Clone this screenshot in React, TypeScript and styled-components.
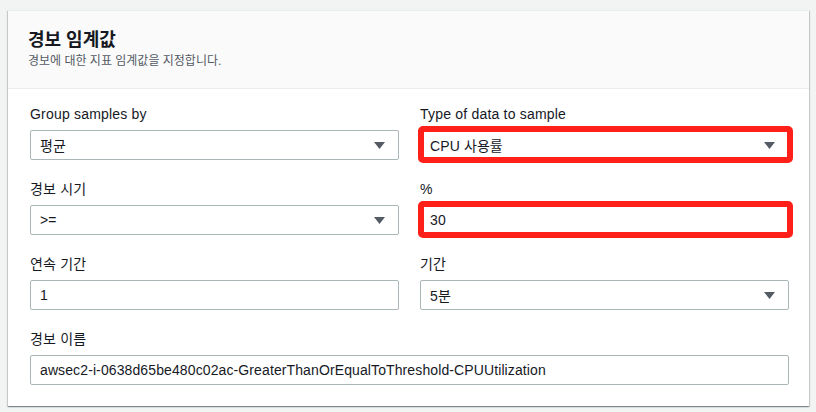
import React from "react";
import styled, { createGlobalStyle } from "styled-components";

const Global = createGlobalStyle`
  html, body { margin: 0; padding: 0; background: #f2f3f3; }
  body {
    font-family: "Liberation Sans", "Noto Sans CJK KR", Arial, sans-serif;
    color: #16191f;
    -webkit-font-smoothing: antialiased;
  }
`;

const Page = styled.div`
  width: 816px;
  height: 412px;
  padding: 10px 7px 0 8px;
  box-sizing: border-box;
  background: #f2f3f3;
`;

const Card = styled.section`
  background: #ffffff;
  border-top: 1px solid #eaeded;
  box-shadow: 0 1px 1px 0 rgba(0, 28, 36, 0.3), 1px 1px 1px 0 rgba(0, 28, 36, 0.15),
    -1px 1px 1px 0 rgba(0, 28, 36, 0.15);
`;

const Header = styled.header`
  background: #fafafa;
  border-bottom: 1px solid #eaeded;
  padding: 17px 20px 18px 20px;
`;

const Title = styled.h2`
  margin: 0;
  font-size: 18px;
  line-height: 24px;
  font-weight: 700;
  color: #16191f;
`;

const Subtitle = styled.p`
  margin: 0;
  font-size: 12px;
  line-height: 18px;
  color: #545b64;
`;

const Body = styled.div`
  display: grid;
  grid-template-columns: 1fr 1fr;
  column-gap: 21px;
  row-gap: 19px;
  padding: 15px 20px 21px 22px;
`;

const Field = styled.div<{ $full?: boolean }>`
  display: flex;
  flex-direction: column;
  gap: 6px;
  grid-column: ${(p) => (p.$full ? "1 / -1" : "auto")};
`;

const Label = styled.label`
  font-size: 14px;
  line-height: 20px;
  letter-spacing: 0.2px;
  color: #16191f;
`;

const Control = styled.div`
  position: relative;
  height: 30px;
  box-sizing: border-box;
  border: 1px solid #aab7b8;
  border-radius: 2px;
  background: #ffffff;
  display: flex;
  align-items: center;
  justify-content: space-between;
  padding: 0 13px 0 9px;
  font-size: 14px;
  letter-spacing: 0.11px;
  color: #16191f;
`;

const Value = styled.span`
  white-space: nowrap;
`;

const Caret = styled.svg`
  width: 11px;
  height: 7px;
  flex: none;
`;

const Highlight = styled.div`
  position: absolute;
  top: -5px;
  bottom: -4px;
  left: -3px;
  right: -5px;
  border: 6px solid #ff2119;
  border-radius: 5px;
  pointer-events: none;
`;

type FieldProps = {
  label: string;
  value: string;
  select?: boolean;
  highlight?: boolean;
  full?: boolean;
};

const FormField = ({ label, value, select, highlight, full }: FieldProps) => (
  <Field $full={full}>
    <Label>{label}</Label>
    <Control>
      <Value>{value}</Value>
      {select && (
        <Caret viewBox="0 0 11 7">
          <path d="M0 0 H11 L5.5 7 Z" fill="#545b64" />
        </Caret>
      )}
      {highlight && <Highlight />}
    </Control>
  </Field>
);

export default function App() {
  return (
    <>
      <Global />
      <Page>
        <Card>
          <Header>
            <Title>경보 임계값</Title>
            <Subtitle>경보에 대한 지표 임계값을 지정합니다.</Subtitle>
          </Header>
          <Body>
            <FormField label="Group samples by" value="평균" select />
            <FormField label="Type of data to sample" value="CPU 사용률" select highlight />
            <FormField label="경보 시기" value=">=" select />
            <FormField label="%" value="30" highlight />
            <FormField label="연속 기간" value="1" />
            <FormField label="기간" value="5분" select />
            <FormField
              full
              label="경보 이름"
              value="awsec2-i-0638d65be480c02ac-GreaterThanOrEqualToThreshold-CPUUtilization"
            />
          </Body>
        </Card>
      </Page>
    </>
  );
}
